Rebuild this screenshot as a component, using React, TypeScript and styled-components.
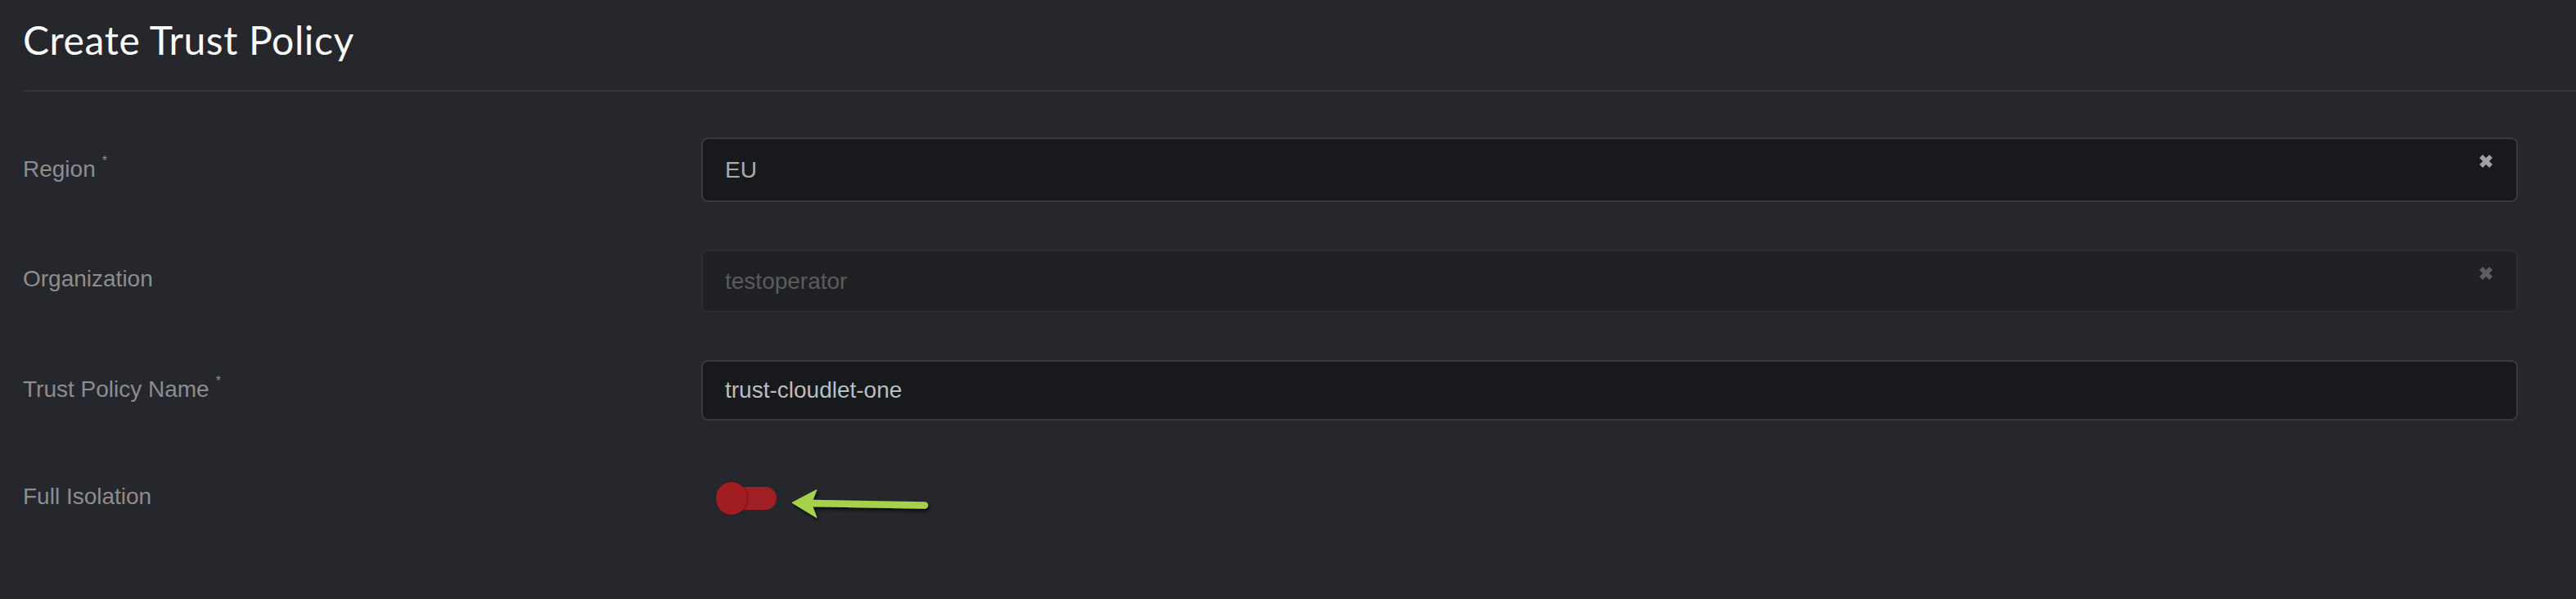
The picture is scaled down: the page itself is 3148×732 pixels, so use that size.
import React from "react";
import styled, { createGlobalStyle } from "styled-components";

const GlobalStyle = createGlobalStyle`
  html, body {
    margin: 0;
    padding: 0;
    background: #26272c;
  }
  body {
    width: 3148px;
    height: 732px;
    overflow: hidden;
  }
`;

const Page = styled.div`
  width: 3148px;
  height: 732px;
  overflow: hidden;
  background: #26272c;
`;

const Header = styled.header`
  margin-left: 28px;
  padding: 25px 0 37px;
  border-bottom: 2px solid #35363b;
`;

const Title = styled.h1`
  margin: 0;
  font-family: Lato, "Open Sans", sans-serif;
  font-weight: 400;
  font-size: 48px;
  line-height: 48px;
  letter-spacing: 0.6px;
  color: #fafafa;
`;

const Form = styled.form`
  display: flex;
  flex-direction: column;
  gap: 58px;
  padding: 56px 0 0 28px;
`;

const Row = styled.div<{ $h: number }>`
  display: grid;
  grid-template-columns: 829px 2220px;
  align-items: center;
  height: ${(p) => p.$h}px;
  flex-shrink: 0;
`;

const Label = styled.label<{ $shift?: number }>`
  font-family: "Liberation Sans", Arial, sans-serif;
  font-size: 28px;
  color: #8d8d8f;
  padding-bottom: 5px;
  position: relative;
  top: ${(p) => p.$shift ?? 0}px;
`;

const Required = styled.sup`
  font-size: 16px;
  margin-left: 8px;
  color: #8d8d8f;
  vertical-align: 14px;
`;

const InputBox = styled.div<{ $disabled?: boolean }>`
  position: relative;
  box-sizing: border-box;
  height: 100%;
  display: flex;
  align-items: center;
  padding: 0 60px 0 27px;
  border: 2px solid ${(p) => (p.$disabled ? "#2c2d32" : "#393a3f")};
  border-radius: 8px;
  background: ${(p) => (p.$disabled ? "#1f2024" : "#18191c")};
`;

const Value = styled.span<{ $tone: string }>`
  font-family: "Liberation Sans", Arial, sans-serif;
  font-size: 28px;
  color: ${(p) => p.$tone};
`;

const Clear = styled.svg`
  position: absolute;
  top: 18px;
  right: 28px;
  width: 18px;
  height: 18px;
`;

const FieldCell = styled.div`
  display: flex;
  align-items: center;
  height: 100%;
`;

const Toggle = styled.div`
  position: relative;
  width: 74px;
  height: 40px;
  margin-left: 18px;
  flex-shrink: 0;
`;

const Track = styled.span`
  position: absolute;
  left: 6px;
  right: 0;
  top: 6px;
  height: 28px;
  border-radius: 14px;
  background: #9f1f24;
`;

const Knob = styled.span`
  position: absolute;
  left: 0;
  top: 0;
  width: 38px;
  height: 40px;
  border-radius: 50%;
  background: #a21d22;
  box-shadow: 1px 0 2px rgba(0, 0, 0, 0.35);
`;

const Arrow = styled.svg`
  margin-left: 7px;
  width: 190px;
  height: 56px;
  overflow: visible;
`;

function ClearIcon({ color }: { color: string }) {
  return (
    <Clear viewBox="0 0 18 18">
      <path
        d="M3 3 L15 15 M15 3 L3 15"
        stroke={color}
        strokeWidth={5.5}
        strokeLinecap="butt"
        fill="none"
      />
    </Clear>
  );
}

export default function App() {
  return (
    <Page>
      <GlobalStyle />
      <Header>
        <Title>Create Trust Policy</Title>
      </Header>
      <Form>
        <Row $h={79}>
          <Label>
            Region<Required>*</Required>
          </Label>
          <InputBox>
            <Value $tone="#ababad">EU</Value>
            <ClearIcon color="#a2a2a4" />
          </InputBox>
        </Row>
        <Row $h={77}>
          <Label>Organization</Label>
          <InputBox $disabled>
            <Value $tone="#5b5b5e">testoperator</Value>
            <ClearIcon color="#5e5e61" />
          </InputBox>
        </Row>
        <Row $h={74}>
          <Label>
            Trust Policy Name<Required>*</Required>
          </Label>
          <InputBox>
            <Value $tone="#bdbdbf">trust-cloudlet-one</Value>
          </InputBox>
        </Row>
        <Row $h={74}>
          <Label>Full Isolation</Label>
          <FieldCell>
            <Toggle>
              <Track />
              <Knob />
            </Toggle>
            <Arrow viewBox="0 0 190 56">
              <defs>
                <filter id="arrowShadow" x="-10%" y="-40%" width="130%" height="200%">
                  <feDropShadow dx="2" dy="3" stdDeviation="2" floodColor="#000" floodOpacity="0.7" />
                </filter>
              </defs>
              <g filter="url(#arrowShadow)" fill="#a6d14b" stroke="#a6d14b">
                <path d="M35 34 L174 36.5" strokeWidth={8.5} strokeLinecap="round" fill="none" />
                <path d="M12 33.3 L42 17.5 L37 30 L37 38.5 L42 51.5 Z" strokeWidth={1} strokeLinejoin="round" />
              </g>
            </Arrow>
          </FieldCell>
        </Row>
        <Row $h={74}>
          <Label $shift={4}>Outbound Security Rules</Label>
          <FieldCell />
        </Row>
      </Form>
    </Page>
  );
}
